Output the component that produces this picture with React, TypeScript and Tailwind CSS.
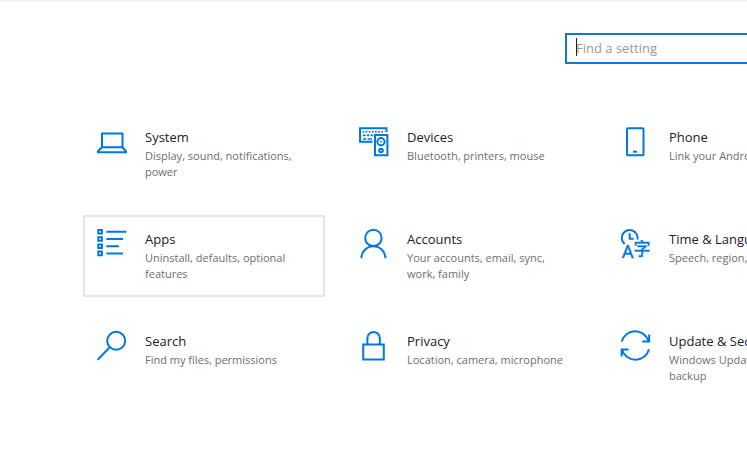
import type { ReactNode } from "react";

type Category = {
  title: string;
  description: string;
  icon: ReactNode;
  active?: boolean;
};

function Icon({ children }: { children: ReactNode }) {
  return (
    <svg
      viewBox="0 0 30 30"
      className="size-[30px] shrink-0 overflow-visible text-[#0078e0]"
      fill="none"
      stroke="currentColor"
      strokeWidth="2"
      aria-hidden="true"
    >
      {children}
    </svg>
  );
}

const categories: Category[] = [
  {
    title: "System",
    description: "Display, sound, notifications, power",
    icon: (
      <Icon>
        <path d="M5 6.5h20.5v13.8H5zM5 20.3l-4 3.9v1.1h28v-1.1l-3.7-3.9" />
      </Icon>
    ),
  },
  {
    title: "Devices",
    description: "Bluetooth, printers, mouse",
    icon: (
      <Icon>
        <path d="M27.5 5V1.2H1v13.6h12.5" />
        <path d="M3.5 4.7h22" strokeDasharray="1.8 1.3" strokeWidth="1.6" />
        <path
          d="M4 8.3h2.6M7.8 8.3h2.6M11.6 8.3H14M4 12h3.2M8.6 12h4.4"
          strokeWidth="1.7"
        />
        <path d="M16 8h12.4v20.2H16z" />
        <circle cx="22" cy="14.7" r="3.6" />
        <circle cx="22" cy="23.5" r="1.8" />
        <circle cx="22" cy="14.7" r="0.9" fill="currentColor" stroke="none" />
      </Icon>
    ),
  },
  {
    title: "Phone",
    description: "Link your Android, iPhone",
    icon: (
      <Icon>
        <rect x="6" y="1.2" width="16.5" height="27" rx="1" />
        <path d="M12 24.7h4.2" />
      </Icon>
    ),
  },
  {
    title: "Apps",
    description: "Uninstall, defaults, optional features",
    active: true,
    icon: (
      <Icon>
        <path d="M1.3 1h3.6v3.6H1.3zM1.3 8.2h3.6v3.6H1.3zM1.3 15.4h3.6V19H1.3zM1.3 22.6h3.6v3.6H1.3z" />
        <path d="M9.3 2.8h20M9.3 10H26M9.3 17.2H22M9.3 24.4H26" />
      </Icon>
    ),
  },
  {
    title: "Accounts",
    description: "Your accounts, email, sync, work, family",
    icon: (
      <Icon>
        <circle cx="14.4" cy="8.9" r="8.2" />
        <path d="M2.4 29.3a12 12 0 0 1 24 0" />
      </Icon>
    ),
  },
  {
    title: "Time & Language",
    description: "Speech, region, date",
    icon: (
      <Icon>
        <path d="M3.6 15A7.9 7.9 0 1 1 16.4 10.5" />
        <path d="M8.7 4.3v5.4h4" />
        <text
          x="1"
          y="29"
          fontSize="18"
          fill="currentColor"
          strokeWidth="0.5"
          className="font-['Open_Sans',sans-serif]"
        >
          A
        </text>
        <text
          x="12.4"
          y="26.4"
          fontSize="17"
          fill="currentColor"
          strokeWidth="0.5"
          className="font-['Noto_Sans_CJK_SC',sans-serif]"
        >
          字
        </text>
      </Icon>
    ),
  },
  {
    title: "Search",
    description: "Find my files, permissions",
    icon: (
      <Icon>
        <circle cx="19.2" cy="9.8" r="9" />
        <path d="M12.7 16.3.7 28.7" />
      </Icon>
    ),
  },
  {
    title: "Privacy",
    description: "Location, camera, microphone",
    icon: (
      <Icon>
        <path d="M4.2 13.4h20.6v15H4.2z" />
        <path d="M8.4 13.4V7.2a6.2 6.2 0 0 1 12.4 0v6.2" />
      </Icon>
    ),
  },
  {
    title: "Update & Security",
    description: "Windows Update, recovery, backup",
    icon: (
      <Icon>
        <path d="M.7 10.6A14 14 0 0 1 27.5 10M28.2 3.4v7h-7" />
        <path d="M28 18.2A14 14 0 0 1 1 18.7M.6 25.4v-7h7" />
      </Icon>
    ),
  },
];

function CategoryTile({ title, description, icon, active }: Category) {
  return (
    <a
      href="#"
      className={`flex h-full items-start gap-[18px] border-2 p-3 ${
        active ? "border-[#e5e5e5]" : "border-transparent"
      }`}
    >
      {icon}
      <div className="min-w-0">
        <h2 className="text-[13px] leading-5 text-[#222222]">{title}</h2>
        <p className="mt-px text-[11px] leading-4 text-[#6e6e6e]">
          {description}
        </p>
      </div>
    </a>
  );
}

export default function App() {
  return (
    <div className="min-h-screen overflow-hidden border-t-2 border-[#f2f2f2] bg-white font-['Segoe_UI','Open_Sans','Noto_Sans',sans-serif]">
      <header className="flex pt-[31px] pl-[565px]">
        <div className="relative shrink-0">
          <input
            type="text"
            aria-label="Find a setting"
            placeholder="Find a setting"
            className="h-[31px] w-[272px] border-2 border-[#0f78d8] bg-white px-[9px] pb-0.5 text-[13px] caret-transparent outline-none placeholder:text-[#999999]"
          />
          <span className="absolute top-[5px] left-[11px] h-[18px] w-px bg-[#222222]" />
        </div>
      </header>

      <main className="pt-[49px] pl-[83px]">
        <ul className="grid auto-rows-[minmax(82px,auto)] grid-cols-[repeat(3,minmax(242px,1fr))] gap-5">
          {categories.map((category) => (
            <li key={category.title}>
              <CategoryTile {...category} />
            </li>
          ))}
        </ul>
      </main>
    </div>
  );
}
